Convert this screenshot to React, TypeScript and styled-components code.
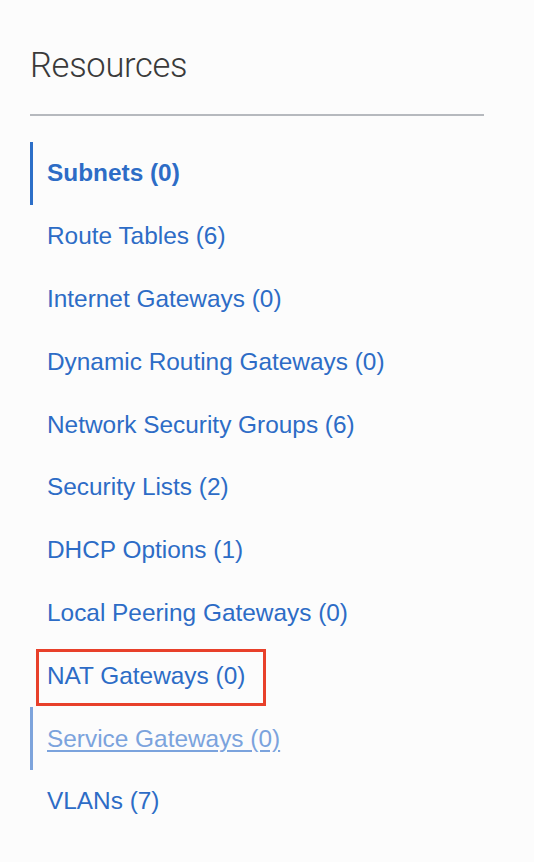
import React from "react";
import styled, { createGlobalStyle, css } from "styled-components";

const Global = createGlobalStyle`
  html, body { margin: 0; padding: 0; background: #fcfcfc; }
  body { font-family: "Liberation Sans", Arial, sans-serif; }
`;

const Panel = styled.nav`
  width: 454px;
  padding: 40px 0 0 30px;
  box-sizing: content-box;
`;

const Title = styled.h2`
  margin: 0;
  font-family: Roboto, "Liberation Sans", sans-serif;
  font-weight: 300;
  font-size: 34.5px;
  line-height: 50px;
  color: #3a3a3a;
  letter-spacing: -0.3px;
`;

const Divider = styled.hr`
  margin: 24px 0 26px;
  border: none;
  height: 2px;
  background: #b6b9be;
`;

const List = styled.ul`
  list-style: none;
  margin: 0;
  padding: 0;
  display: flex;
  flex-direction: column;
`;

type ItemState = "active" | "hover" | "normal";

const Item = styled.li<{ $state: ItemState }>`
  position: relative;
  height: 62.8px;
  display: flex;
  align-items: center;
  padding-left: 14px;
  border-left: 3px solid transparent;
  ${({ $state }) =>
    $state === "active" &&
    css`
      border-left-color: #2d6fc8;
    `}
  ${({ $state }) =>
    $state === "hover" &&
    css`
      border-left-color: #7ea4dc;
    `}
`;

const Link = styled.a<{ $state: ItemState }>`
  font-size: 24.4px;
  line-height: 28px;
  color: #2d6cc6;
  text-decoration: none;
  font-weight: ${({ $state }) => ($state === "active" ? 700 : 400)};
  ${({ $state }) =>
    $state === "hover" &&
    css`
      color: #7ba3dd;
      text-decoration: underline;
      text-underline-offset: 3px;
    `}
`;

const Highlight = styled.span`
  position: absolute;
  left: 3px;
  top: 5px;
  width: 230px;
  height: 57px;
  box-sizing: border-box;
  border: 3px solid #e8402a;
  pointer-events: none;
`;

const items: { label: string; state: ItemState; highlight?: boolean }[] = [
  { label: "Subnets (0)", state: "active" },
  { label: "Route Tables (6)", state: "normal" },
  { label: "Internet Gateways (0)", state: "normal" },
  { label: "Dynamic Routing Gateways (0)", state: "normal" },
  { label: "Network Security Groups (6)", state: "normal" },
  { label: "Security Lists (2)", state: "normal" },
  { label: "DHCP Options (1)", state: "normal" },
  { label: "Local Peering Gateways (0)", state: "normal" },
  { label: "NAT Gateways (0)", state: "normal", highlight: true },
  { label: "Service Gateways (0)", state: "hover" },
  { label: "VLANs (7)", state: "normal" },
];

export default function App() {
  return (
    <>
      <Global />
      <Panel>
        <Title>Resources</Title>
        <Divider />
        <List>
          {items.map((it) => (
            <Item key={it.label} $state={it.state}>
              {it.highlight && <Highlight />}
              <Link $state={it.state} href="#">
                {it.label}
              </Link>
            </Item>
          ))}
        </List>
      </Panel>
    </>
  );
}
